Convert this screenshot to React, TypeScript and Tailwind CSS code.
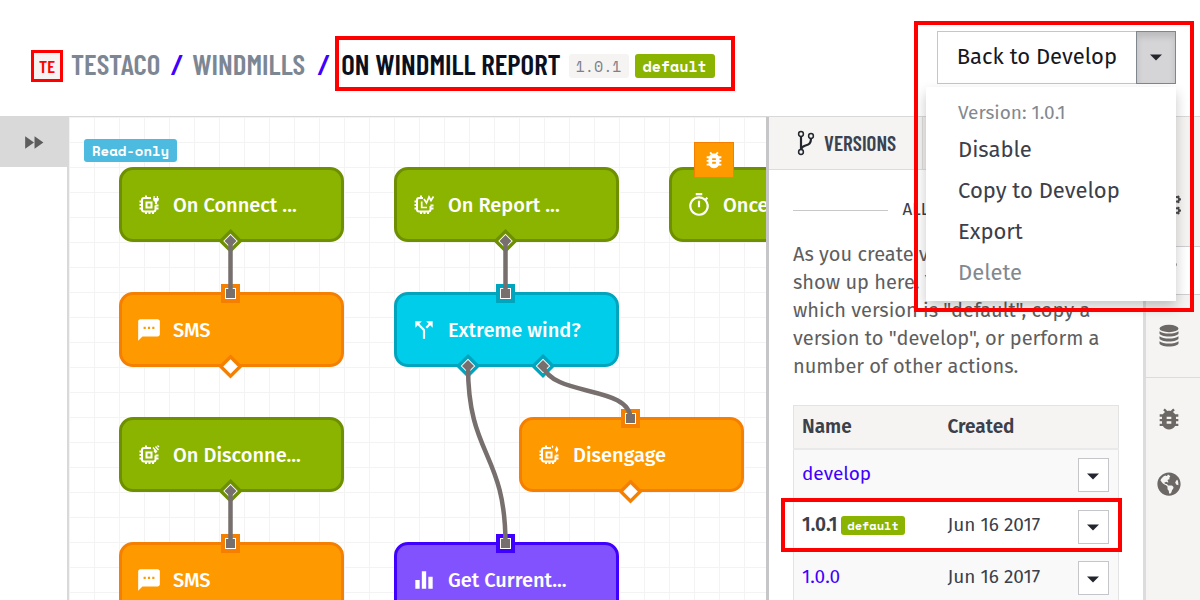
import React from "react";
import {
  MdBugReport,
  MdCallSplit,
  MdEqualizer,
  MdFastForward,
  MdOutlineTimer,
  MdSms,
} from "react-icons/md";
import { FaCogs, FaGlobeAmericas } from "react-icons/fa";

type Tone = "green" | "orange" | "cyan" | "purple";

const toneClasses: Record<Tone, string> = {
  green: "bg-[#8ab400] border-[#6d8f00]",
  orange: "bg-[#ff9900] border-[#f57f00]",
  cyan: "bg-[#00cdea] border-[#00a4bd]",
  purple: "bg-[#8352ff] border-[#4000ff]",
};

const toneStroke: Record<Tone, string> = {
  green: "#6d8f00",
  orange: "#f57f00",
  cyan: "#00a4bd",
  purple: "#4000ff",
};

function Chip({ badge }: { badge: "plug" | "report" | "unplug" | "spark" }) {
  return (
    <svg viewBox="0 0 24 24" className="size-6" fill="none" stroke="currentColor" strokeWidth="2" aria-hidden="true">
      <path
        d={
          badge === "report"
            ? "M11 5H7a2 2 0 0 0-2 2v9.500a2 2 0 0 0 2 2h9.500a2 2 0 0 0 2-2V13"
            : "M14 5H7a2 2 0 0 0-2 2v9.500a2 2 0 0 0 2 2h9.500a2 2 0 0 0 2-2V12.500"
        }
      />
      <path d="M9 5V2.500M9 21v-3M12.500 21v-3M16 21v-3M5 8.500H2.500M5 12H2.500M5 15.500H2.500M21.500 15.500h-3M21.500 12.500h-3" />
      {badge === "report" ? (
        <path d="M9.700 8.500v6h5.300M12 6l2.500 4 2.500-6 2 3.500 2.500-4" strokeWidth="1.700" />
      ) : (
        <rect x="9.500" y="9.500" width="5" height="5" />
      )}
      {badge === "plug" && (
        <path
          d="M16.500 3h1.200v2h2.100V3H21v2h.8v2.200l-1.700 1.900V11h-2.200V9.100l-1.700-1.900V5h.3z"
          stroke="none"
          fill="currentColor"
        />
      )}
      {badge === "unplug" && <path d="M16 4.500l4 4.500M18.500 3.500l3 3.500M17 7.500l2 2.500M20.500 2.500l1.500 1.500" strokeWidth="1.400" />}
      {badge === "spark" && (
        <path d="M19.700 3l1.800 3.500-1.800 3.500-1.800-3.500zM15.500 2l.9 1.800-.9 1.800-.9-1.800z" stroke="none" fill="currentColor" />
      )}
    </svg>
  );
}

function Branch({ className }: { className: string }) {
  return (
    <svg viewBox="0 0 18 26" className={className} fill="none" stroke="currentColor" aria-hidden="true">
      <circle cx="4" cy="4" r="2.400" strokeWidth="1.500" />
      <circle cx="14" cy="6" r="2.400" strokeWidth="1.500" />
      <circle cx="4" cy="22" r="2.400" strokeWidth="1.500" />
      <path d="M4 6.500v13M14 8.500c0 5-2 6-5.500 7S4.500 17.500 4 19.500" strokeWidth="2.200" />
    </svg>
  );
}

function Database() {
  return (
    <svg viewBox="0 0 20 24" className="h-6 w-5" fill="currentColor" aria-hidden="true">
      <ellipse cx="10" cy="4.500" rx="9.500" ry="3.700" />
      <path d="M.5 7.300c2 1.500 5.500 2.300 9.500 2.300s7.500-.8 9.500-2.300v2c0 1.700-4 3.200-9.500 3.200S.5 11 .5 9.300z" />
      <path d="M.5 12.300c2 1.500 5.500 2.300 9.500 2.300s7.500-.8 9.500-2.300v2c0 1.700-4 3.200-9.500 3.200S.5 16 .5 14.300z" />
      <path d="M.5 17.300c2 1.500 5.500 2.300 9.500 2.300s7.500-.8 9.500-2.300v2c0 1.700-4 3.200-9.500 3.200S.5 21 .5 19.300z" />
    </svg>
  );
}

function Caret() {
  return (
    <svg viewBox="0 0 12 7" className="h-[7px] w-3" fill="currentColor" aria-hidden="true">
      <path d="M0 .5h12L6 6.500z" />
    </svg>
  );
}

interface FlowNode {
  label: string;
  tone: Tone;
  icon: React.ReactNode;
  place: string;
}

const nodes: FlowNode[] = [
  { label: "On Connect ...", tone: "green", icon: <Chip badge="plug" />, place: "left-[50px] top-[50px]" },
  { label: "SMS", tone: "orange", icon: <MdSms size={26} />, place: "left-[50px] top-[175px]" },
  { label: "On Disconne...", tone: "green", icon: <Chip badge="unplug" />, place: "left-[50px] top-[300px]" },
  { label: "SMS", tone: "orange", icon: <MdSms size={26} />, place: "left-[50px] top-[425px]" },
  { label: "On Report ...", tone: "green", icon: <Chip badge="report" />, place: "left-[325px] top-[50px]" },
  { label: "Extreme wind?", tone: "cyan", icon: <MdCallSplit size={26} />, place: "left-[325px] top-[175px]" },
  { label: "Disengage", tone: "orange", icon: <Chip badge="spark" />, place: "left-[450px] top-[300px]" },
  { label: "Get Current...", tone: "purple", icon: <MdEqualizer size={26} />, place: "left-[325px] top-[425px]" },
  { label: "Once", tone: "green", icon: <MdOutlineTimer size={26} />, place: "left-[600px] top-[50px]" },
];

const outputs: { x: number; y: number; tone: Tone; linked: boolean }[] = [
  { x: 161.5, y: 124, tone: "green", linked: true },
  { x: 161.5, y: 249.5, tone: "orange", linked: false },
  { x: 161.5, y: 374, tone: "green", linked: true },
  { x: 436.5, y: 124, tone: "green", linked: true },
  { x: 399, y: 249, tone: "cyan", linked: true },
  { x: 474, y: 249, tone: "cyan", linked: true },
  { x: 561.5, y: 374.5, tone: "orange", linked: false },
];

const inputs: { x: number; y: number; tone: Tone }[] = [
  { x: 161.5, y: 176.5, tone: "orange" },
  { x: 161.5, y: 426.5, tone: "orange" },
  { x: 436.5, y: 176.5, tone: "cyan" },
  { x: 561.5, y: 301.5, tone: "orange" },
  { x: 436.5, y: 426.5, tone: "purple" },
];

const links = [
  "M161.500 124V177",
  "M161.500 374V427",
  "M436.500 124V177",
  "M399 249C399 340 436.500 335 436.500 427",
  "M474 249C484 280 561.500 268 561.500 302",
];

function Canvas() {
  return (
    <main className="relative min-w-0 flex-1 overflow-hidden bg-white bg-[linear-gradient(to_right,#f3f3f3_1px,transparent_1px),linear-gradient(to_bottom,#f3f3f3_1px,transparent_1px)] bg-[size:25px_25px]">
      <span className="absolute left-[15px] top-[22px] rounded-[3px] bg-[#4dbbe0] px-2 font-['Space_Mono','Liberation_Mono',monospace] text-[14px] leading-[23px] font-bold text-white">
        Read-only
      </span>
      {nodes.map((n, i) => (
        <div
          key={i}
          className={`absolute flex h-[75px] w-[225px] items-center gap-[11px] rounded-[14px] border-[3px] pl-[14px] text-white ${n.place} ${toneClasses[n.tone]}`}
        >
          <span className="flex w-[26px] justify-center">{n.icon}</span>
          <span className="text-[20px] leading-6 font-medium whitespace-nowrap">{n.label}</span>
        </div>
      ))}
      <div className="absolute left-[625px] top-[25px] flex h-9 w-10 items-center justify-center border border-[#f57f00] bg-[#ff9900] text-white">
        <MdBugReport size={22} />
      </div>
      <svg className="absolute left-0 top-0 h-[490px] w-[700px]" fill="none" aria-hidden="true">
        {outputs.map((p, i) => (
          <g key={i} transform={`translate(${p.x} ${p.y})`}>
            <path d="M0-9.700L9.700 0 0 9.700-9.700 0z" fill="#fff" stroke={toneStroke[p.tone]} strokeWidth="3.400" />
            {p.linked && <path d="M0-6L6 0 0 6-6 0z" fill="#766f6e" />}
          </g>
        ))}
        {inputs.map((p, i) => (
          <g key={i} transform={`translate(${p.x} ${p.y})`}>
            <rect x="-7.500" y="-7.500" width="15" height="15" fill="#fff" stroke={toneStroke[p.tone]} strokeWidth="4" />
            <rect x="-4.500" y="-4.500" width="9" height="9" fill="#766f6e" />
          </g>
        ))}
        {links.map((d) => (
          <path key={d} d={d} stroke="#766f6e" strokeWidth="4.500" />
        ))}
      </svg>
    </main>
  );
}

const versions = [
  { name: "develop", created: "", current: false },
  { name: "1.0.1", created: "Jun 16 2017", current: true },
  { name: "1.0.0", created: "Jun 16 2017", current: false },
];

function VersionsPanel() {
  return (
    <section className="w-[377px] shrink-0 overflow-hidden border-l-[3px] border-[#c6c6c9] bg-white">
      <div className="flex h-[53px] border-b border-[#dcdcdc] bg-[#f0efee]">
        <h2 className="flex w-[154px] items-center gap-[9px] border-r border-[#dcdcdc] bg-[#f5f4f2] pl-7 font-['Barlow_Condensed','Roboto_Condensed',sans-serif] text-[21px] font-semibold text-[#3b4250]">
          <Branch className="h-[26px] w-[18px] text-[#23262e]" />
          VERSIONS
        </h2>
      </div>
      <div className="px-6 pt-7">
        <div className="flex items-center gap-[15px]">
          <span className="h-px flex-1 bg-[#c6c8ca]" />
          <h3 className="text-[17px] leading-6 text-[#3b404a]">ALL VERSIONS</h3>
          <span className="h-px flex-1 bg-[#c6c8ca]" />
        </div>
        <p className="mt-[18px] text-[20px] leading-7 text-[#5e5e60]">
          As you create versions, they will show up here. You can specify which version is "default", copy a version
          to "develop", or perform a number of other actions.
        </p>
        <table className="mt-[25px] w-full table-fixed border-collapse border border-[#e3e3e3] text-left text-[19px] text-[#3b404a]">
          <thead>
            <tr className="h-[43px] border-b-2 border-[#e9e9e9] bg-[#f5f4f2]">
              <th className="w-[154px] pl-2 font-semibold">Name</th>
              <th className="font-semibold">Created</th>
              <th className="w-[50px]" aria-label="Actions" />
            </tr>
          </thead>
          <tbody>
            {versions.map((v) => (
              <tr key={v.name} className={v.current ? "h-[52px] bg-white" : "h-[52px] bg-[#f9f9f9]"}>
                <td className="relative pb-[2px] pl-2 whitespace-nowrap">
                  {v.current ? (
                    <span className="flex items-center gap-1">
                      <span className="font-semibold">{v.name}</span>
                      <span className="rounded-[3px] bg-[#8ab400] px-[6px] font-['Space_Mono','Liberation_Mono',monospace] text-[12px] leading-[19px] font-bold text-white">
                        default
                      </span>
                      <span className="pointer-events-none absolute -left-[13px] top-[-3px] z-10 h-[54px] w-[341px] border-4 border-[#ff0000]" />
                    </span>
                  ) : (
                    <a href="#version" className="text-[#4000ff]">
                      {v.name}
                    </a>
                  )}
                </td>
                <td className="pb-[2px]">{v.created}</td>
                <td>
                  <button
                    type="button"
                    aria-label={`Actions for ${v.name}`}
                    className="ml-[9px] flex h-[34px] w-[31px] items-center justify-center border border-[#c4c6ca] bg-white pt-[2px] text-[#23262e]"
                  >
                    <Caret />
                  </button>
                </td>
              </tr>
            ))}
          </tbody>
        </table>
      </div>
    </section>
  );
}

function Rail() {
  const item = "flex items-center justify-center pr-2";
  return (
    <nav className="flex w-[57px] shrink-0 flex-col border-l-[3px] border-[#dcdcde] bg-[#f5f4f3] text-[#6b6866]">
      <button type="button" aria-label="Settings" className={`${item} h-[129px] pt-[46px] text-[#4a4a4c]`}>
        <FaCogs size={24} />
      </button>
      <button type="button" aria-label="Versions" className={`${item} h-[49px] border-y border-[#cfcfd1] bg-white text-[#3b404a]`}>
        <Branch className="h-6 w-5" />
      </button>
      <button type="button" aria-label="Storage" className={`${item} h-[83px] border-b border-[#dcdcde]`}>
        <Database />
      </button>
      <button type="button" aria-label="Debug" className={`${item} h-[82px]`}>
        <MdBugReport size={28} />
      </button>
      <button type="button" aria-label="Global" className={`${item} h-12`}>
        <FaGlobeAmericas size={24} />
      </button>
    </nav>
  );
}

function VersionMenu() {
  const entry = "block w-full pl-8 text-left text-[22px] leading-[41px]";
  return (
    <div className="absolute right-0 top-full z-20 mt-[3px] w-[250px] bg-white pt-3 pb-2 text-[#3b404a] shadow-[0_6px_12px_rgba(0,0,0,0.22)]">
      <p className="mb-[2px] pl-8 text-[19px] leading-7 text-[#83888e]">Version: 1.0.1</p>
      <button type="button" className={entry}>
        Disable
      </button>
      <button type="button" className={entry}>
        Copy to Develop
      </button>
      <button type="button" className={entry}>
        Export
      </button>
      <button type="button" disabled className={`${entry} text-[#83888e]`}>
        Delete
      </button>
    </div>
  );
}

export default function App() {
  return (
    <div className="flex h-screen flex-col overflow-hidden bg-white font-['Fira_Sans','Noto_Sans',sans-serif]">
      <header className="flex shrink-0 items-start justify-between border-b border-[#d8d8d8] pr-6 pl-[31px]">
        <nav
          aria-label="Breadcrumb"
          className="flex items-start pt-[50px] font-['Barlow_Condensed','Roboto_Condensed',sans-serif] text-[29px] leading-7 font-semibold whitespace-nowrap text-[#7d8794]"
        >
          <span className="flex size-8 items-center justify-center border-[3px] border-[#ff0000] bg-[#f5f4f2] text-[18px] text-[#ff0000]">
            TE
          </span>
          <a href="#org" className="ml-2">
            TESTACO
          </a>
          <span className="w-8 text-center text-[#4000ff] italic">/</span>
          <a href="#app">WINDMILLS</a>
          <span className="w-9 text-center text-[#4000ff] italic">/</span>
          <span className="relative flex items-start">
            <h1 className="text-[#0b1020]">ON WINDMILL REPORT</h1>
            <span className="mt-1 ml-2 rounded-[3px] bg-[#f5f4f2] px-[7px] font-['Space_Mono','Liberation_Mono',monospace] text-[15px] leading-6 font-normal text-[#7d8088]">
              1.0.1
            </span>
            <span className="mt-1 ml-[6px] rounded-[3px] bg-[#8ab400] px-2 font-['Space_Mono','Liberation_Mono',monospace] text-[15px] leading-6 font-bold text-white">
              default
            </span>
            <span className="pointer-events-none absolute -top-[14px] -right-5 -bottom-[13px] -left-[6px] border-4 border-[#ff0000]" />
          </span>
        </nav>
        <div className="relative mt-[31px] mb-8 flex h-[53px]">
          <button type="button" className="border border-r-0 border-[#c4c6c8] bg-white px-[19px] pb-[2px] text-[22px] text-[#16181f]">
            Back to Develop
          </button>
          <button
            type="button"
            aria-label="Version actions"
            aria-expanded="true"
            className="flex w-10 items-center justify-center border border-[#7f868e] bg-[#d5d5d7] text-[#23262e] shadow-[inset_0_5px_6px_rgba(0,0,0,0.12)]"
          >
            <Caret />
          </button>
          <VersionMenu />
          <span className="pointer-events-none absolute -left-[23px] -top-[10px] -right-[18px] z-30 h-[291px] border-4 border-[#ff0000]" />
        </div>
      </header>
      <div className="flex min-h-0 flex-1">
        <aside className="w-[69px] shrink-0 border-r-2 border-[#d9d9db] bg-white">
          <button
            type="button"
            aria-label="Expand sidebar"
            className="flex h-[50px] w-full items-center justify-center bg-[#d9d9d9] text-[#5d5d5f]"
          >
            <MdFastForward size={25} />
          </button>
        </aside>
        <Canvas />
        <VersionsPanel />
        <Rail />
      </div>
    </div>
  );
}
